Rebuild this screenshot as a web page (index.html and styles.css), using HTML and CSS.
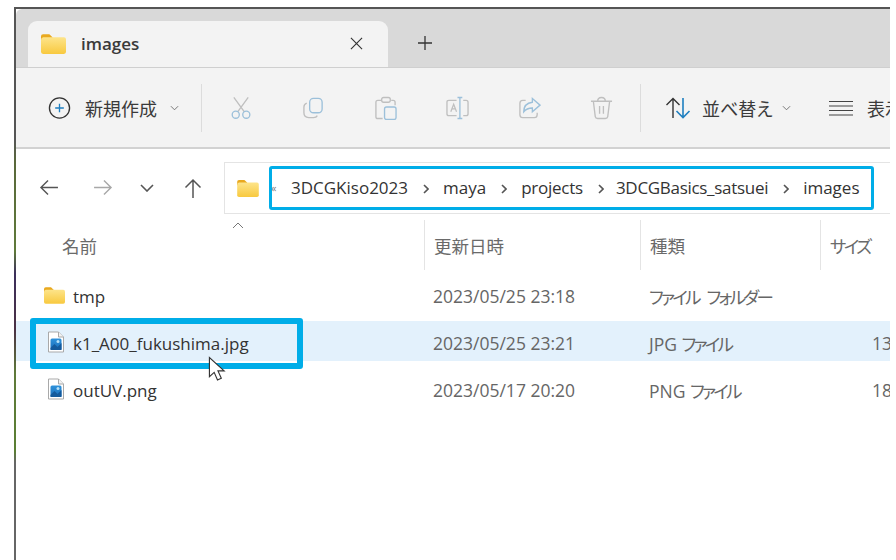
FILE: index.html
```html
<!DOCTYPE html>
<html lang="ja">
<head>
<meta charset="utf-8">
<title>images</title>
<link rel="stylesheet" href="styles.css">
</head>
<body>
<svg class="defs" width="0" height="0">
  <defs>
    <linearGradient id="fold" x1="0" y1="0" x2="0" y2="1"><stop offset="0" stop-color="#fde48a"/><stop offset="1" stop-color="#f8c93f"/></linearGradient>
    <linearGradient id="pic" x1="0" y1="0" x2="0" y2="1"><stop offset="0" stop-color="#2f93dc"/><stop offset="1" stop-color="#1a6db8"/></linearGradient>
    <symbol id="folder" viewBox="0 0 24 20">
      <path d="M0 3a2 2 0 0 1 2-2h6l3 3v3H0z" fill="#e9a91f"/>
      <path d="M0 6.500q0-2 2-2.500h20a2 2 0 0 1 2 2v12a2 2 0 0 1-2 2H2a2 2 0 0 1-2-2z" fill="url(#fold)"/>
    </symbol>
    <symbol id="image" viewBox="0 0 18 22">
      <path d="M1.500 1h10l5 5v15h-15z" fill="#fff" stroke="#a9a9a9"/>
      <path d="M11.500 1v5h5" fill="#f2f2f2" stroke="#a9a9a9"/>
      <rect x="3.500" y="7.500" width="11" height="11.500" rx="1.500" fill="url(#pic)"/>
      <path d="M3.500 19v-2l4-4 3 3 4-4v7z" fill="#145a9c"/>
      <circle cx="11" cy="10.500" r="1.500" fill="#b5e0f7"/>
    </symbol>
    <symbol id="chev" viewBox="0 0 10 6"><path d="M1 1l4 4 4-4" fill="none" stroke="#6a6a6a" stroke-width="1"/></symbol>
    <symbol id="crumb" viewBox="0 0 6 10"><path d="M1 1l4 4-4 4" fill="none" stroke="#555" stroke-width="1.600"/></symbol>
  </defs>
</svg>

<main class="window">
  <header class="tabbar">
    <div class="tab">
      <svg class="tab-folder"><use href="#folder"/></svg>
      <span class="tab-title">images</span>
      <svg class="tab-close" viewBox="0 0 14 14"><path d="M1 1l12 12M13 1L1 13" stroke="#333" stroke-width="1.200"/></svg>
    </div>
    <svg class="tab-add" viewBox="0 0 14 14"><path d="M7 0v14M0 7h14" stroke="#333" stroke-width="1.300"/></svg>
  </header>

  <section class="toolbar">
    <div class="tool-new">
      <svg class="tool-ic" viewBox="0 0 24 24"><circle cx="12" cy="12" r="10.500" fill="none" stroke="#333" stroke-width="1.400"/><path d="M12 7.500v9M7.500 12h9" stroke="#1f7fc0" stroke-width="1.400"/></svg>
      <span class="tool-label">新規作成</span>
      <svg class="tool-chev"><use href="#chev"/></svg>
    </div>
    <div class="sep"></div>
    <div class="tool-btn"><svg class="tool-ic" viewBox="0 0 24 24"><path d="M4 1l11 15M19 1L8 16" fill="none" stroke="#bfbfbf" stroke-width="1.400"/><circle cx="6" cy="19" r="3.700" fill="none" stroke="#9cc0da" stroke-width="1.400"/><circle cx="17" cy="19" r="3.700" fill="none" stroke="#9cc0da" stroke-width="1.400"/></svg></div>
    <div class="tool-btn"><svg class="tool-ic" viewBox="0 0 24 24"><rect x="8" y="2" width="13" height="15" rx="4" fill="none" stroke="#9cc0da" stroke-width="1.400"/><path d="M5 7q-3 1-3 4v6q0 5 5 5h5q3 0 4-2" fill="none" stroke="#bfbfbf" stroke-width="1.400"/></svg></div>
    <div class="tool-btn"><svg class="tool-ic" viewBox="0 0 24 24"><path d="M8 4H4q-2 0-2 2v15q0 2 2 2h5M18 4h2q2 0 2 2v3" fill="none" stroke="#bfbfbf" stroke-width="1.400"/><rect x="8" y="1" width="9" height="5" rx="2" fill="none" stroke="#bfbfbf" stroke-width="1.400"/><rect x="11" y="11" width="12" height="13" rx="2" fill="none" stroke="#9cc0da" stroke-width="1.400"/></svg></div>
    <div class="tool-btn"><svg class="tool-ic" viewBox="0 0 24 24"><path d="M11 4H3q-2 0-2 2v12q0 2 2 2h8M18 4h3q2 0 2 2v12q0 2-2 2h-3" fill="none" stroke="#bfbfbf" stroke-width="1.400"/><path d="M5 16l3-8 3 8M6 13h4" fill="none" stroke="#bfbfbf" stroke-width="1.300"/><path d="M12 1h5M12 23h5M14.500 1v22" fill="none" stroke="#9cc0da" stroke-width="1.400"/></svg></div>
    <div class="tool-btn"><svg class="tool-ic" viewBox="0 0 24 24"><path d="M8 4H5q-3 0-3 3v12q0 3 3 3h12q3 0 3-3v-2" fill="none" stroke="#bfbfbf" stroke-width="1.400"/><path d="M15 2l8 7-8 7v-4q-6 0-9 4 0-9 9-10z" fill="none" stroke="#9cc0da" stroke-width="1.400"/></svg></div>
    <div class="tool-btn"><svg class="tool-ic" viewBox="0 0 24 24"><path d="M1 5h22M8 5q0-4 4-4t4 4M3.500 5l2 16q.3 2 2.500 2h8q2.200 0 2.500-2l2-16M10 10v8M14 10v8" fill="none" stroke="#bfbfbf" stroke-width="1.400"/></svg></div>
    <div class="sep"></div>
    <div class="tool-sort">
      <svg class="tool-sort-ic" viewBox="0 0 26 24"><path d="M8 22V3M1.500 9L8 2.500 14.500 9" fill="none" stroke="#333" stroke-width="1.400"/><path d="M18 2v19M11.500 15l6.500 6.500 6.500-6.500" fill="none" stroke="#1f7fc0" stroke-width="1.600"/></svg>
      <span class="tool-label">並べ替え</span>
      <svg class="tool-chev"><use href="#chev"/></svg>
    </div>
    <div class="tool-view">
      <svg class="tool-lines" viewBox="0 0 24 16"><path d="M0 1.500h24M0 6h24M0 10.500h24M0 15h24" stroke="#444" stroke-width="1.200"/></svg>
      <span class="tool-label">表示</span>
    </div>
  </section>

  <nav class="navbar">
    <svg class="nav-back" viewBox="0 0 20 18"><path d="M20 9H2M9.500 1.500L2 9l7.500 7.500" fill="none" stroke="#555" stroke-width="1.500"/></svg>
    <svg class="nav-fwd" viewBox="0 0 20 18"><path d="M0 9h18M10.500 1.500L18 9l-7.500 7.500" fill="none" stroke="#a8a8a8" stroke-width="1.500"/></svg>
    <svg class="nav-down" viewBox="0 0 14 8"><path d="M1 1l6 6 6-6" fill="none" stroke="#555" stroke-width="1.600"/></svg>
    <svg class="nav-up" viewBox="0 0 18 20"><path d="M9 20V2M1.500 9.500L9 2l7.500 7.500" fill="none" stroke="#555" stroke-width="1.500"/></svg>
    <div class="address">
      <svg class="addr-folder"><use href="#folder"/></svg>
      <span class="addr-more">«</span>
      <span class="crumb">3DCGKiso2023</span><svg class="crumb-sep"><use href="#crumb"/></svg>
      <span class="crumb">maya</span><svg class="crumb-sep"><use href="#crumb"/></svg>
      <span class="crumb crumb-short">projects</span><svg class="crumb-sep"><use href="#crumb"/></svg>
      <span class="crumb crumb-long">3DCGBasics_satsuei</span><svg class="crumb-sep"><use href="#crumb"/></svg>
      <span class="crumb">images</span>
    </div>
  </nav>

  <section class="files">
    <div class="row head">
      <div class="cell name-head">名前<svg class="sort-up" viewBox="0 0 12 7"><path d="M1 6l5-5 5 5" fill="none" stroke="#777" stroke-width="1"/></svg></div>
      <div class="cell col">更新日時</div>
      <div class="cell col">種類</div>
      <div class="cell col"><span class="kana">サイズ</span></div>
    </div>
    <div class="row item">
      <div class="cell name"><svg class="ic-folder"><use href="#folder"/></svg><span>tmp</span></div>
      <div class="cell muted">2023/05/25 23:18</div>
      <div class="cell muted"><span class="kana">ファイル フォルダー</span></div>
      <div class="cell muted"></div>
    </div>
    <div class="row item selected">
      <div class="cell name"><svg class="ic-image"><use href="#image"/></svg><span>k1_A00_fukushima.jpg</span></div>
      <div class="cell muted">2023/05/25 23:21</div>
      <div class="cell muted">JPG <span class="kana">ファイル</span></div>
      <div class="cell muted size">13 KB</div>
    </div>
    <div class="row item">
      <div class="cell name"><svg class="ic-image"><use href="#image"/></svg><span>outUV.png</span></div>
      <div class="cell muted">2023/05/17 20:20</div>
      <div class="cell muted">PNG <span class="kana">ファイル</span></div>
      <div class="cell muted size">18 KB</div>
    </div>
  </section>
</main>

<div class="mark mark-path"></div>
<div class="mark mark-file"></div>
<svg class="cursor" viewBox="0 0 20 28"><path d="M1.500 1.500v20l5-4.500 3.500 8 4-1.800-3.500-7.700h6.500z" fill="#fff" stroke="#333" stroke-width="1.200"/></svg>
</body>
</html>
```

FILE: styles.css
```css
* { box-sizing: border-box; }
html, body { margin: 0; height: 100%; background: #fff; overflow: hidden; }
body {
  font-family: "Open Sans", "Noto Sans CJK JP", sans-serif;
  font-feature-settings: "palt";
  color: #333;
}
.defs { position: absolute; }
svg { display: block; flex: none; }

.window {
  margin-left: 14px;
  margin-top: 7px;
  width: 876px;
  height: 553px;
  border-top: 2px solid #5a5a5a;
  border-left: 2px solid transparent;
  border-image: linear-gradient(#555 0, #555 24%, #59683a 28%, #5f7a3a 44%, #3c2f5c 48%, #4a3044 58%, #5f7a3a 66%, #5a7f33 80%, #666 82%, #666 100%) 2;
  border-right: 0;
  border-bottom: 0;
  background: #fff;
  overflow: hidden;
  display: flex;
  flex-direction: column;
}

.tabbar {
  height: 58px;
  background: #d9d9d9;
  border-top-left-radius: 6px;
  padding: 12px 0 0 12px;
  display: flex;
  align-items: flex-start;
  flex: none;
}
.tab {
  width: 360px;
  height: 46px;
  background: #f3f3f3;
  border-radius: 9px 9px 0 0;
  display: flex;
  align-items: center;
  padding: 0 16px 2px 13px;
}
.tab-folder { width: 25px; height: 21px; }
.tab-title { margin-left: 15px; font-size: 17px; font-weight: 600; color: #3a3a3a; flex: 1; }
.tab-close { width: 13px; height: 13px; margin-right: 9px; }
.tab-add { width: 14px; height: 14px; margin: 15px 0 0 30px; }

.toolbar {
  height: 82px;
  background: #f3f3f3;
  border-top: 1px solid #cfcfcf;
  border-bottom: 2px solid #d2d2d2;
  display: flex;
  align-items: center;
  flex: none;
  white-space: nowrap;
}
.toolbar > * { flex: none; }
.tool-new { display: flex; align-items: center; margin-left: 32px; width: 150px; }
.tool-ic { width: 23px; height: 24px; }
.tool-label { font-size: 18px; color: #3a3a3a; margin-left: 14px; }
.tool-chev { width: 9px; height: 6px; margin-left: 13px; }
.sep { width: 1px; height: 48px; background: #dcdcdc; margin: 0 3px; }
.tool-btn { width: 72px; display: flex; justify-content: center; }
.tool-sort { display: flex; align-items: center; margin-left: 21px; width: 164px; }
.tool-sort-ic { width: 26px; height: 24px; }
.tool-sort .tool-label { margin-left: 11px; }
.tool-sort .tool-chev { margin-left: 9px; }
.tool-view { display: flex; align-items: center; }
.tool-lines { width: 24px; height: 16px; }

.navbar {
  height: 65px;
  display: flex;
  align-items: center;
  flex: none;
  padding-top: 12px;
}
.nav-back { width: 19px; height: 17px; margin-left: 23px; }
.nav-fwd { width: 19px; height: 17px; margin-left: 36px; }
.nav-down { width: 14px; height: 8px; margin-left: 27px; }
.nav-up { width: 18px; height: 20px; margin-left: 30px; }
.address {
  margin-left: 22px;
  height: 52px;
  flex: 1;
  background: #fff;
  border: 1px solid #e4e4e4;
  border-right: 0;
  display: flex;
  align-items: center;
  font-size: 17px;
  color: #333;
  white-space: nowrap;
  padding-left: 12px;
}
.addr-folder { width: 22px; height: 18px; }
.addr-more { font-size: 11px; color: #777; margin-left: 12px; width: 20px; }
.crumb-sep { width: 6px; height: 10px; margin: 2px 14px 0 15px; }
.crumb-short { letter-spacing: -0.25px; }
.crumb-long { letter-spacing: -0.3px; margin-left: -2px; }

.files { flex: 1; }
.row {
  display: grid;
  grid-template-columns: 408px 216px 180px 1fr;
  align-items: center;
}
.cell { font-size: 17.500px; white-space: nowrap; }
.head { height: 50px; margin-top: 6px; margin-bottom: 4px; align-items: stretch; }
.head .cell { color: #6a6a6a; display: flex; align-items: center; position: relative; }
.name-head { padding-left: 46px; }
.col { border-left: 1px solid #e4e4e4; padding-left: 9px; }
.kana { letter-spacing: -2.700px; word-spacing: 6px; }
.sort-up { position: absolute; left: 216px; top: 2px; width: 12px; height: 7px; }
.item { height: 40px; margin-bottom: 7px; padding-top: 4px; }
.item.selected { background: #e3f1fc; }
.name { display: flex; align-items: center; color: #333; padding-left: 28px; font-size: 17px; }
.name span { margin-left: 8px; }
.ic-folder { width: 21px; height: 18px; margin-top: -3px; }
.ic-image { width: 18px; height: 22px; margin: -2px 0 0 3px; }
.muted { color: #666; padding-left: 9px; }
.size { padding-left: 52px; }

.mark { position: absolute; border-style: solid; border-color: #00ade8; border-radius: 3px; }
.mark-path { left: 269px; top: 166px; width: 605px; height: 44px; border-width: 3px; }
.mark-file { left: 30px; top: 318px; width: 273px; height: 51px; border-width: 6px; }
.cursor { position: absolute; left: 208px; top: 356px; width: 19px; height: 27px; }
```
